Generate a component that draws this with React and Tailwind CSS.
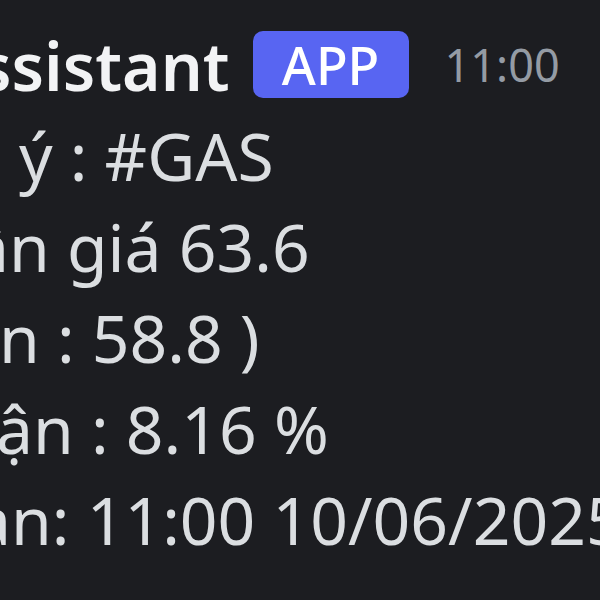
import React from 'react';

const lines = [
  { text: 'u ý : #GAS', shift: 'ml-[-39px]' },
  { text: 'ần giá 63.6', shift: 'ml-[-28px]' },
  { text: 'ốn : 58.8 )', shift: 'ml-[-41px]' },
  { text: 'ận : 8.16 %', shift: 'ml-[-4px]' },
  { text: 'an: 11:00 10/06/2025', shift: 'ml-[-26px]' },
];

export default function App() {
  return (
    <div
      className="w-[600px] h-[600px] overflow-hidden bg-[#1c1d21] pt-[19px]"
      style={{ fontFamily: '"Noto Sans", sans-serif' }}
    >
      {/* Header */}
      <div className="flex items-center h-[91px] whitespace-nowrap">
        <span className="ml-[-21px] text-[66px] font-semibold text-[#f2f3f5] leading-none">
          ssistant
        </span>
        <span className="ml-[23px] flex items-center justify-center h-[67px] w-[156px] rounded-[10px] bg-[#5865f2] text-white text-[52px] font-medium leading-none">
          APP
        </span>
        <span className="ml-[36px] text-[45px] text-[#949ba4] leading-none">11:00</span>
      </div>

      {/* Message body */}
      <div className="flex flex-col text-[66px] text-[#dbdee1] whitespace-nowrap">
        {lines.map((l, i) => (
          <div key={i} className={`h-[91px] leading-[91px] ${l.shift}`}>
            {l.text}
          </div>
        ))}
      </div>
    </div>
  );
}
